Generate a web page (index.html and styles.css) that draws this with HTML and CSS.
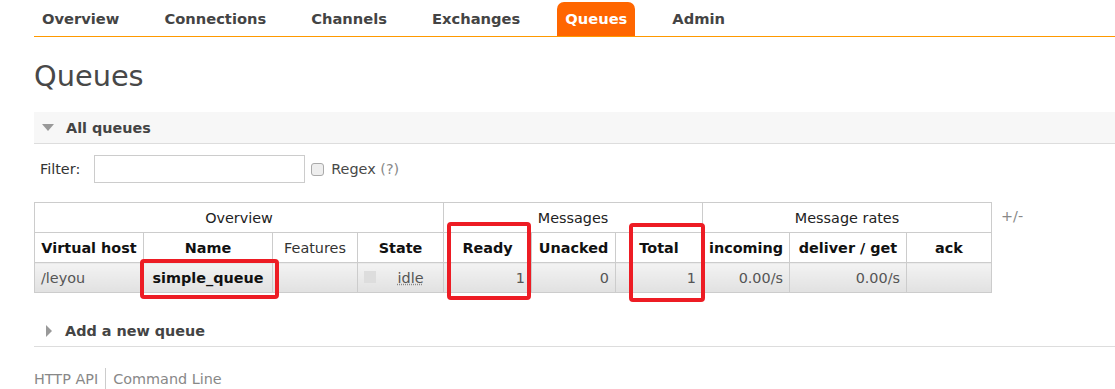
FILE: index.html
```html
<!DOCTYPE html>
<html lang="en">
<head>
	<meta charset="UTF-8">
	<title>RabbitMQ Management</title>
	<link rel="stylesheet" href="styles.css">
</head>
<body>
	<ul class="tabs">
		<li><a href="#">Overview</a></li>
		<li><a href="#">Connections</a></li>
		<li><a href="#">Channels</a></li>
		<li><a href="#">Exchanges</a></li>
		<li><a href="#" class="selected">Queues</a></li>
		<li><a href="#">Admin</a></li>
	</ul>
	<div class="main">
		<h1>Queues</h1>
		<div class="section">
			<h2 class="open"><span class="arrow_down"></span>All queues</h2>
			<div class="filter">
				<label>Filter:</label>
				<input type="text" class="filter_txt">
				<span class="check"></span>
				<span class="regex">Regex <span class="help">(?)</span></span>
			</div>
			<div class="list_wrap">
				<table class="list">
					<colgroup>
						<col style="width:109px"><col style="width:129px"><col style="width:85px"><col style="width:86px">
						<col style="width:88px"><col style="width:84px"><col style="width:87px">
						<col style="width:87px"><col style="width:117px"><col style="width:85px">
					</colgroup>
					<tr class="group">
						<th colspan="4">Overview</th>
						<th colspan="3">Messages</th>
						<th colspan="3">Message rates</th>
					</tr>
					<tr class="head">
						<th>Virtual host</th>
						<th>Name</th>
						<th class="plain">Features</th>
						<th>State</th>
						<th>Ready</th>
						<th>Unacked</th>
						<th>Total</th>
						<th>incoming</th>
						<th>deliver / get</th>
						<th>ack</th>
					</tr>
					<tr class="alt1">
						<td>/leyou</td>
						<td class="c"><b>simple_queue</b></td>
						<td></td>
						<td class="state"><span class="dot"></span><abbr>idle</abbr></td>
						<td class="r">1</td>
						<td class="r">0</td>
						<td class="r">1</td>
						<td class="r">0.00/s</td>
						<td class="r">0.00/s</td>
						<td></td>
					</tr>
				</table>
				<span class="toggle">+/-</span>
			</div>
		</div>
		<div class="section closed">
			<h2><span class="arrow_right"></span>Add a new queue</h2>
		</div>
		<p class="footer"><a href="#">HTTP API</a><a href="#" class="last">Command Line</a></p>
	</div>
	<div class="mark mark1"></div>
	<div class="mark mark2"></div>
	<div class="mark mark3"></div>
</body>
</html>
```

FILE: styles.css
```css
html,body{background: #fff;}
html,body,div,p,ul,li,span,a,h1,h2,table,th,td,label,input{margin: 0; padding: 0;font-family: "DejaVu Sans",Verdana,sans-serif;font-size: 14.4px;}
body{position: relative;padding-left: 34px;color: #484848;}

.tabs{display: flex;list-style: none;padding-top: 2px;border-bottom: 1px solid #f90;}
.tabs li{margin-right: 29px;}
.tabs a{display: block;height: 34px;line-height: 34px;padding: 0 8px;font-weight: bold;font-size: 14.7px;color: #444;text-decoration: none;border-radius: 7px 7px 0 0;}
.tabs a.selected{background: #f60;color: #fff;}

h1{font-size: 28.8px;font-weight: normal;line-height: 36px;margin: 21px 0 18px;color: #484848;}

.section h2{display: flex;align-items: center;height: 31px;border-bottom: 1px solid #ddd;font-weight: bold;color: #444;}
.section h2.open{background: #f7f7f7;}
.arrow_down{width: 0;height: 0;border-left: 6px solid transparent;border-right: 6px solid transparent;border-top: 7px solid #999;margin: 0 12px 0 8px;}
.arrow_right{width: 0;height: 0;border-top: 6px solid transparent;border-bottom: 6px solid transparent;border-left: 6px solid #999;margin: 0 13px 0 12px;}

.filter{display: flex;align-items: center;height: 28px;margin: 11px 0 19px 6px;}
.filter label{margin-right: 14px;color: #333;}
.filter_txt{width: 211px;height: 28px;box-sizing: border-box;border: 1px solid #ccc;}
.check{width: 11px;height: 11px;border: 1px solid #aaa;border-radius: 3px;background: #eee;margin: 0 7px 0 6px;}
.regex{color: #484848;}
.help{color: #888;}

.list_wrap{display: flex;align-items: flex-start;}
table.list{border-collapse: collapse;table-layout: fixed;width: 957px;}
table.list th,table.list td{height: 29px;padding: 0 6px;border: 1px solid #ccc;white-space: nowrap;}
tr.group th{font-weight: normal;color: #222;}
tr.head th{font-weight: bold;color: #111;}
tr.head th.plain{font-weight: normal;color: #333;}
tr.alt1 td{background: linear-gradient(#f3f3f3,#e1e1e1);color: #555;}
td.c{text-align: center;}
td.c b{color: #111;}
td.r{text-align: right;}
td.state{text-align: center;position: relative;}
.dot{position: absolute;left: 6px;top: 8px;width: 12px;height: 12px;background: #ddd;}
abbr{text-decoration: underline dotted #888;margin-left: 20px;}
.toggle{margin: 6px 0 0 9px;color: #888;}

.closed{margin-top: 22px;}
.footer{margin-top: 21px;display: flex;}
.footer a{color: #888;text-decoration: none;line-height: 22px;padding-right: 7px;}
.footer a.last{border-left: 1px solid #ccc;padding-left: 7px;}

.mark{position: absolute;border: 4px solid #ed1c24;border-radius: 4px;box-sizing: border-box;}
.mark1{left: 140px;top: 259px;width: 139px;height: 40px;}
.mark2{left: 447px;top: 222px;width: 84px;height: 78px;}
.mark3{left: 629px;top: 223px;width: 76px;height: 79px;}
```
